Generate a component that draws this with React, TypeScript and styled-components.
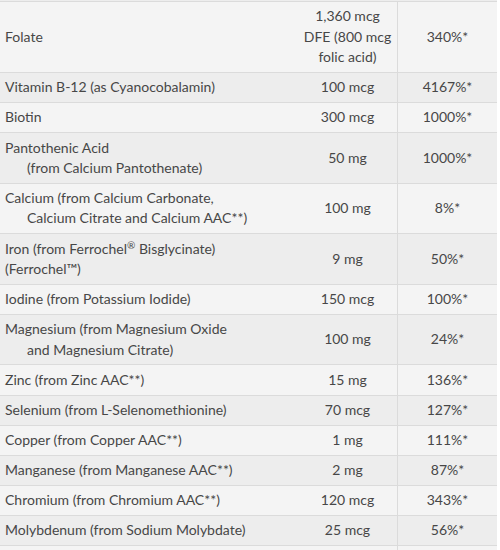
import React from "react";
import styled, { createGlobalStyle } from "styled-components";

const GlobalStyle = createGlobalStyle`
  html, body {
    margin: 0;
    padding: 0;
    background: #ffffff;
  }
  body {
    font-family: Lato, "Noto Sans", sans-serif;
  }
`;

const Wrapper = styled.div`
  width: 497px;
  height: 550px;
  overflow: hidden;
  padding-top: 1px;
  background: #ededed;
  box-sizing: border-box;
`;

const Table = styled.table`
  width: 497px;
  border-collapse: collapse;
  table-layout: fixed;
  font-size: 14px;
  line-height: 20.4px;
  color: #474747;
`;

const Row = styled.tr<{ $shade: boolean }>`
  background: ${(p) => (p.$shade ? "#ededed" : "#f4f4f4")};
  border-top: 1px solid #dbdbdb;
`;

const Cell = styled.td`
  padding: 4.36px 5px;
  vertical-align: middle;
`;

const NameCell = styled(Cell)`
  width: 288px;
  text-align: left;
`;

const AmountCell = styled(Cell)`
  width: 89px;
  text-align: center;
`;

const ValueCell = styled(Cell)`
  width: 89px;
  text-align: center;
  border-left: 1px solid #dbdbdb;
`;

const Line = styled.div`
  white-space: nowrap;
`;

const Sub = styled.div`
  white-space: nowrap;
  padding-left: 22px;
`;

const Sup = styled.sup`
  font-size: 10px;
  line-height: 0;
  vertical-align: 5px;
`;

interface Nutrient {
  name: React.ReactNode[];
  amount: React.ReactNode;
  value: string;
}

const rows: Nutrient[] = [
  {
    name: ["Folate"],
    amount: (
      <>
        1,360 mcg
        <br />
        DFE (800 mcg
        <br />
        folic acid)
      </>
    ),
    value: "340%*",
  },
  { name: ["Vitamin B-12 (as Cyanocobalamin)"], amount: "100 mcg", value: "4167%*" },
  { name: ["Biotin"], amount: "300 mcg", value: "1000%*" },
  {
    name: ["Pantothenic Acid", <Sub key="s">(from Calcium Pantothenate)</Sub>],
    amount: "50 mg",
    value: "1000%*",
  },
  {
    name: [
      "Calcium (from Calcium Carbonate,",
      <Sub key="s">Calcium Citrate and Calcium AAC**)</Sub>,
    ],
    amount: "100 mg",
    value: "8%*",
  },
  {
    name: [
      <Line key="l">
        Iron (from Ferrochel<Sup>®</Sup> Bisglycinate)
      </Line>,
      <Line key="m">(Ferrochel™)</Line>,
    ],
    amount: "9 mg",
    value: "50%*",
  },
  { name: ["Iodine (from Potassium Iodide)"], amount: "150 mcg", value: "100%*" },
  {
    name: ["Magnesium (from Magnesium Oxide", <Sub key="s">and Magnesium Citrate)</Sub>],
    amount: "100 mg",
    value: "24%*",
  },
  { name: ["Zinc (from Zinc AAC**)"], amount: "15 mg", value: "136%*" },
  { name: ["Selenium (from L-Selenomethionine)"], amount: "70 mcg", value: "127%*" },
  { name: ["Copper (from Copper AAC**)"], amount: "1 mg", value: "111%*" },
  { name: ["Manganese (from Manganese AAC**)"], amount: "2 mg", value: "87%*" },
  { name: ["Chromium (from Chromium AAC**)"], amount: "120 mcg", value: "343%*" },
  { name: ["Molybdenum (from Sodium Molybdate)"], amount: "25 mcg", value: "56%*" },
];

export default function App() {
  return (
    <>
      <GlobalStyle />
      <Wrapper>
        <Table>
          <tbody>
            {rows.map((row, i) => (
              <Row key={i} $shade={i % 2 === 1}>
                <NameCell>
                  {row.name.map((part, j) =>
                    typeof part === "string" ? <Line key={j}>{part}</Line> : part
                  )}
                </NameCell>
                <AmountCell>{row.amount}</AmountCell>
                <ValueCell>{row.value}</ValueCell>
              </Row>
            ))}
            <Row $shade={false}>
              <NameCell />
              <AmountCell />
              <ValueCell />
            </Row>
          </tbody>
        </Table>
      </Wrapper>
    </>
  );
}
